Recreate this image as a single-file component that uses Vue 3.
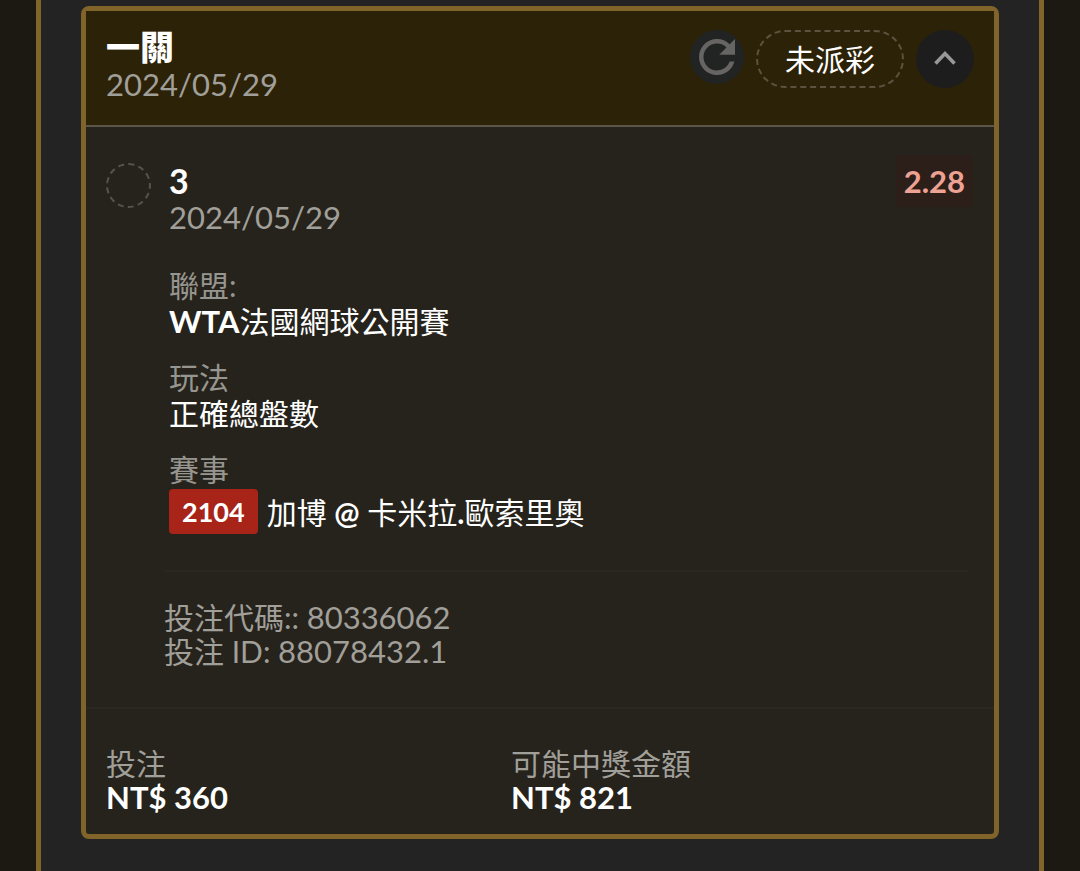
<script setup>
import { ref } from 'vue'

const open = ref(true)
const codes = [
  { label: '投注代碼::', value: '80336062' },
  { label: '投注 ID:', value: '88078432.1' },
]
const totals = [
  { label: '投注', value: 'NT$ 360' },
  { label: '可能中獎金額', value: 'NT$ 821' },
]
</script>

<template>
  <main class="page">
    <section class="panel">
      <article class="card">
        <header class="head">
          <div class="head-text">
            <h1 class="title">一關</h1>
            <time class="date" datetime="2024-05-29">2024/05/29</time>
          </div>
          <div class="actions">
            <button class="round refresh" type="button" aria-label="重新整理">
              <svg viewBox="0 0 24 24" aria-hidden="true">
                <path fill="currentColor" d="M17.65 6.35A7.96 7.96 0 0 0 12 4c-4.42 0-7.99 3.58-7.99 8s3.57 8 7.99 8c3.73 0 6.84-2.55 7.73-6h-2.08A5.99 5.99 0 0 1 12 18c-3.31 0-6-2.69-6-6s2.69-6 6-6c1.66 0 3.14.69 4.22 1.78L13 11h7V4l-2.35 2.35z" />
              </svg>
            </button>
            <span class="status">未派彩</span>
            <button class="round toggle" type="button" aria-label="收合" :aria-expanded="open" @click="open = !open">
              <svg viewBox="0 0 58 58" aria-hidden="true">
                <path d="M19.5 33.5L29 23.5L38.5 33.5" fill="none" stroke="currentColor" stroke-width="3.6" />
              </svg>
            </button>
          </div>
        </header>

        <div v-show="open" class="selection">
          <span class="marker"></span>
          <div class="info">
            <div class="top">
              <div>
                <h2 class="pick">3</h2>
                <time class="date" datetime="2024-05-29">2024/05/29</time>
              </div>
              <strong class="odds">2.28</strong>
            </div>
            <dl class="facts">
              <div>
                <dt>聯盟:</dt>
                <dd><span class="latin">WTA</span>法國網球公開賽</dd>
              </div>
              <div>
                <dt>玩法</dt>
                <dd>正確總盤數</dd>
              </div>
              <div>
                <dt>賽事</dt>
                <dd class="event"><span class="code">2104</span><span>加博 <b>@</b> 卡米拉<b>.</b>歐索里奧</span></dd>
              </div>
            </dl>
          </div>
        </div>

        <div v-show="open" class="codes">
          <p v-for="c in codes" :key="c.label">{{ c.label }} <span class="latin">{{ c.value }}</span></p>
        </div>

        <dl class="totals">
          <div v-for="t in totals" :key="t.label">
            <dt>{{ t.label }}</dt>
            <dd>{{ t.value }}</dd>
          </div>
        </dl>
      </article>
    </section>
  </main>
</template>

<style>
html,
body {
  margin: 0;
  background: #1c1912;
}
</style>

<style scoped>
.page {
  box-sizing: border-box;
  min-height: 100vh;
  display: flex;
  padding: 0 36px;
  background: #1c1912;
  color: #fff;
  font-family: Lato, "Noto Sans CJK TC", sans-serif;
  font-size: 30px;
  line-height: 36px;
}
h1, h2, p, dl, dd {
  margin: 0;
}
.panel {
  flex: 1;
  padding: 6px 40px 32px;
  border: solid #80642a;
  border-width: 0 5px;
  background: #232323;
}
.card {
  border: 5px solid #80642a;
  border-radius: 8px;
  background: #26231c;
}
.head {
  display: flex;
  justify-content: space-between;
  align-items: flex-start;
  padding: 17px 20px 22px;
  border-bottom: 2px solid #5d5545;
  background: #2c2208;
}
.title {
  font-size: 34px;
  line-height: 38px;
  font-weight: 900;
}
.date {
  display: block;
  font-size: 31px;
  line-height: 37px;
  color: #a19f99;
}
.actions {
  display: flex;
  align-items: center;
  gap: 12px;
  padding-top: 2px;
}
.round {
  display: block;
  padding: 0;
  border: 0;
  border-radius: 50%;
  cursor: pointer;
}
.round svg {
  display: block;
  width: 100%;
}
.refresh {
  width: 54px;
  height: 54px;
  margin-bottom: 4px;
  background: #222323;
  color: #666564;
}
.toggle {
  width: 58px;
  height: 58px;
  background: #1d1d1e;
  color: #989898;
}
.status {
  padding: 9px 27px;
  border: 2px dashed #5c533e;
  border-radius: 30px;
}
.selection {
  display: flex;
  gap: 18px;
  padding: 36px 25px 0 20px;
}
.marker {
  box-sizing: border-box;
  flex: none;
  width: 45px;
  height: 45px;
  border: 2px dashed #56534d;
  border-radius: 50%;
}
.info {
  flex: 1;
}
.top {
  display: flex;
  justify-content: space-between;
  align-items: flex-start;
}
.pick {
  font-size: 34px;
  line-height: 36px;
  font-weight: 700;
}
.odds {
  margin: -8px -4px 0 0;
  padding: 8px;
  border-radius: 4px;
  background: #2c1f19;
  color: #eea294;
  font-size: 31px;
}
.facts {
  display: grid;
  gap: 20px;
  margin-top: 31px;
}
dt {
  color: #97958f;
}
.latin {
  font-size: 31px;
}
dd .latin {
  font-weight: 700;
}
.event {
  display: flex;
  align-items: center;
  gap: 9px;
  padding-top: 2px;
}
.code {
  padding: 4px 13px;
  border-radius: 4px;
  background: #a82318;
  font-size: 27px;
  font-weight: 700;
  line-height: 37px;
}
.codes {
  margin: 36px 25px 0 78px;
  padding: 28px 0 39px;
  border-top: 2px solid #292720;
  color: #a19f99;
  line-height: 34px;
}
.totals {
  display: grid;
  grid-template-columns: 405px 1fr;
  padding: 37px 20px 20px;
  border-top: 2px solid #2b2822;
  line-height: 34px;
}
.totals dt {
  color: #a19f99;
}
.totals dd {
  font-size: 31px;
  font-weight: 700;
}
</style>
